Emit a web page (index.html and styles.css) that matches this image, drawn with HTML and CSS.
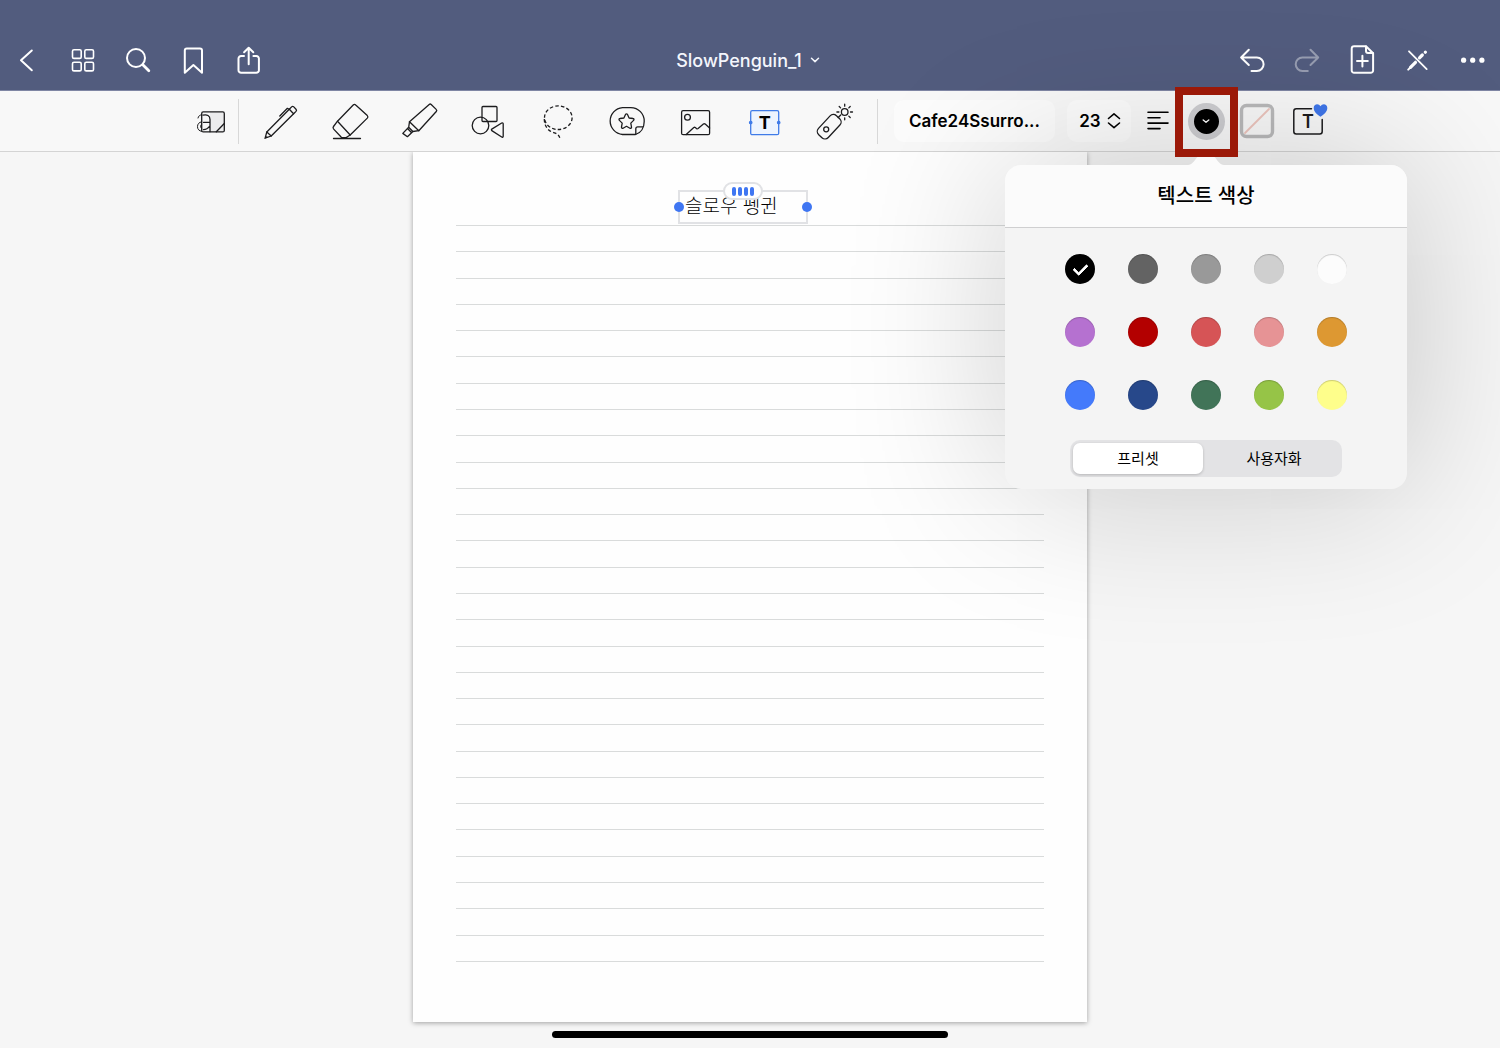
FILE: index.html
```html
<!DOCTYPE html>
<html lang="ko">
<head>
    <meta charset="UTF-8">
    <meta name="viewport" content="width=device-width, initial-scale=1">
    <title>SlowPenguin_1</title>
    <link rel="stylesheet" href="styles.css">
</head>
<body>
    <header class="navbar">
        <div class="nav-group">
            <button class="nav-btn" aria-label="뒤로">
                <svg class="nav-icon" viewBox="0 0 32 32"><path d="M19.8 6.5L9 16.300l10.800 10"/></svg>
            </button>
            <button class="nav-btn" aria-label="썸네일">
                <svg class="nav-icon thin" viewBox="0 0 32 32"><rect x="5.500" y="5.700" width="8.700" height="8.700" rx="1.500"/><rect x="17.800" y="5.700" width="8.700" height="8.700" rx="1.500"/><rect x="5.500" y="18.200" width="8.700" height="8.700" rx="1.500"/><rect x="17.800" y="18.200" width="8.700" height="8.700" rx="1.500"/></svg>
            </button>
            <button class="nav-btn" aria-label="검색">
                <svg class="nav-icon" viewBox="0 0 32 32"><circle cx="14" cy="14" r="9"/><path d="M20.800 20.800l6 6" stroke-width="2.800"/></svg>
            </button>
            <button class="nav-btn" aria-label="책갈피">
                <svg class="nav-icon" viewBox="0 0 32 32"><path d="M7.800 28.800V6.600a2 2 0 0 1 2-2h13.200a2 2 0 0 1 2 2v22.200L16.400 21z"/></svg>
            </button>
            <button class="nav-btn" aria-label="공유">
                <svg class="nav-icon" viewBox="0 0 32 32"><path d="M12 12H9.200A2.600 2.600 0 0 0 6.500 14.600v11.600a2.600 2.600 0 0 0 2.700 2.600h15a2.600 2.600 0 0 0 2.700-2.600V14.600a2.600 2.600 0 0 0-2.700-2.600h-2.800"/><path d="M16.700 20.300V4M12.100 8.200L16.700 3.700l4.600 4.500"/></svg>
            </button>
        </div>
        <button class="doc-title">
            SlowPenguin_1
            <svg width="10" height="10" viewBox="0 0 10 10"><path d="M1.500 3.200L5 6.600l3.500-3.400"/></svg>
        </button>
        <div class="nav-group nav-right">
            <button class="nav-btn" aria-label="실행 취소">
                <svg class="nav-icon" viewBox="0 0 32 32"><path d="M11.800 5.800L4.100 13.500l7.700 7.500M4.100 13.500h15.800a6.700 6.700 0 0 1 0 13.400H14.500"/></svg>
            </button>
            <button class="nav-btn" aria-label="다시 실행" disabled>
                <svg class="nav-icon" viewBox="0 0 32 32"><path d="M18.500 5.800l7.700 7.700L18.500 21M26.200 13.500H10.400a6.700 6.700 0 0 0 0 13.400h5.400"/></svg>
            </button>
            <button class="nav-btn" aria-label="페이지 추가">
                <svg class="nav-icon" viewBox="0 0 32 32"><path d="M19 2.200H7.100A2.400 2.400 0 0 0 4.700 4.600v21.800a2.400 2.400 0 0 0 2.400 2.400h16.600a2.400 2.400 0 0 0 2.400-2.400V9.300z"/><path d="M19 2.400v4.700a2 2 0 0 0 2 2h4.900M15.400 11.700v10.800M10 17.100h10.800"/></svg>
            </button>
            <button class="nav-btn" aria-label="읽기 모드">
                <svg class="nav-icon" viewBox="0 0 32 32"><path d="M7 7.300l17.700 17.800" stroke-width="1.800"/><path d="M8.500 23.300l5-5M17.500 13.800l2.800-2.800M23.300 8.200l.1-.1" stroke-width="3.200"/><path d="M6.200 25.600l3-3"/></svg>
            </button>
            <button class="nav-btn" aria-label="더 보기">
                <svg class="nav-icon dots" viewBox="0 0 32 32"><circle cx="6.600" cy="16.200" r="2.600"/><circle cx="15.700" cy="16.200" r="2.600"/><circle cx="24.900" cy="16.200" r="2.600"/></svg>
            </button>
        </div>
    </header>

    <div class="toolbar">
        <button class="zoom-btn" aria-label="확대 창">
            <svg class="tool-icon" viewBox="0 0 40 40"><path d="M19 11h14v19.500H19z" fill="#ececed" stroke="none"/><rect x="10.700" y="10.900" width="22.600" height="20" rx="1.500"/><path d="M12 14.200c4-.8 7 .2 7 4.300v12.200M12.500 21.400H19M25.300 30.700l8-8.200M12.500 28.700c3 0 4.500-1.200 6.500-3.800"/><path d="M7 17c.4-2 1.700-3 3.700-3.200M10.700 20.800c-2.800.5-4.200 2.200-4.200 4.900 0 2.500 1.600 4.400 4.200 4.600M10.700 23.200c-1.400.6-1.700 3.400 0 4.200" stroke-width="1"/></svg>
        </button>
        <span class="divider"></span>
        <div class="tools">
            <button class="tool-btn" aria-label="펜">
                <svg class="tool-icon" viewBox="0 0 40 40"><path d="M4.800 31L27.300 8.300l4.300 4.500L9.200 35z"/><path d="M27.300 8.300l2.300-2.400a1.600 1.600 0 0 1 2.200 0l2.200 2.300a1.600 1.600 0 0 1 0 2.200l-2.400 2.400M17.800 15l7.600-7.700 1.700.9M4.800 31l-1.700 6.200L9.200 35M3 37.300l1.800-1.400"/></svg>
            </button>
            <button class="tool-btn" aria-label="지우개">
                <svg class="tool-icon" viewBox="0 0 40 40"><path d="M6.500 20.200L22.200 4a1.800 1.800 0 0 1 2.500 0L36.300 14.600a1.800 1.800 0 0 1 0 2.500L19.200 34z"/><path d="M6.500 20.200l-4 5.300a2 2 0 0 0 .2 2.600l7.200 7.700c.5.600 1.100.9 1.800.9h2.500c.6 0 1-.2 1.400-.5l3.600-2.200M2.500 37.500h27"/></svg>
            </button>
            <button class="tool-btn" aria-label="형광펜">
                <svg class="tool-icon" viewBox="0 0 40 40"><path d="M9.500 20.700L29.200 3.500a1.500 1.500 0 0 1 2 0l5 4.900a1.500 1.500 0 0 1 .1 2.100L18.800 29.700z"/><path d="M9.500 20.700l-.8 5.600 4.200 4.200 5.900-.8M8.700 26.300l-5.900 6.100 4.600 3.300 5.500-5.200M8 28l3.400 3.500"/></svg>
            </button>
            <button class="tool-btn" aria-label="도형">
                <svg class="tool-icon" viewBox="0 0 40 40"><rect x="13" y="5.500" width="15" height="15" rx="1"/><circle cx="11.500" cy="24.500" r="8.300"/><path d="M22.800 28.100l9.900-6.100c.8-.5 1.500 0 1.500.9v12.300c0 .9-.7 1.300-1.500.8l-9.900-6.400a.9.9 0 0 1 0-1.500z"/></svg>
            </button>
            <button class="tool-btn" aria-label="올가미">
                <svg class="tool-icon dashed" viewBox="0 0 40 40"><ellipse cx="20.300" cy="16.700" rx="13.800" ry="11.800"/><path d="M6.300 18c0 6 2.700 10.800 7.700 13 3.300 1.200 6 1.200 7.800 5.700"/></svg>
            </button>
            <button class="tool-btn" aria-label="요소">
                <svg class="tool-icon" viewBox="0 0 40 40"><path d="M28.500 33.500H15.500a13.500 13.500 0 0 1 0-26.900h8.300a13.400 13.400 0 0 1 13.400 13.800c0 6-3.200 11.300-8.700 13.100z"/><path d="M28.800 33.300v-5.500a2 2 0 0 1 2-2h5"/><path d="M19.500 12.800c.5 0 .8.300 1 .7l1.600 3.500 3.900.5c1 .1 1.300 1.200.6 1.900l-2.800 2.700.7 3.900c.2 1-.8 1.600-1.600 1.200l-3.400-1.900-3.400 1.900c-.8.400-1.800-.2-1.600-1.200l.7-3.900-2.800-2.700c-.7-.7-.4-1.800.6-1.900l3.900-.5 1.600-3.500c.2-.4.500-.7 1-.7z"/></svg>
            </button>
            <button class="tool-btn" aria-label="이미지">
                <svg class="tool-icon" viewBox="0 0 40 40"><rect x="5.600" y="9.700" width="28" height="24" rx="1.500"/><circle cx="11.500" cy="16.300" r="2.900"/><path d="M10.200 33.500l7.600-6.900c.5-.5 1-.4 1.500 0l1.400 1.100c.5.400.9.300 1.400-.1l5.300-4.500c.6-.5 1.200-.5 1.800 0l4.400 3.900"/></svg>
            </button>
            <button class="tool-btn" aria-label="텍스트">
                <svg class="tool-icon active" viewBox="0 0 40 40"><rect x="5.700" y="9.700" width="28" height="24" rx="1.500"/><circle cx="5.700" cy="21.500" r="1.200"/><circle cx="33.700" cy="21.500" r="1.200"/><text x="19.700" y="28" text-anchor="middle">T</text></svg>
            </button>
            <button class="tool-btn" aria-label="레이저 포인터">
                <svg class="tool-icon" viewBox="0 0 40 40"><rect x="2.200" y="19" width="26" height="13.400" rx="4.500" transform="rotate(-47 15.200 25.700)"/><circle cx="12.200" cy="28.300" r="2.500"/><path d="M24.200 16.500l2.500-2.500"/><circle cx="30.700" cy="11" r="3.300"/><path d="M30.700 3.200v2M30.700 16.800v2M22.900 11h2M36.500 11h2M25.200 5.500l1.400 1.400M34.800 15.100l1.400 1.400M36.200 5.500l-1.400 1.400"/></svg>
            </button>
        </div>
        <span class="divider"></span>
        <button class="pill font-name">Cafe24Ssurro...</button>
        <button class="pill font-size">
            23
            <svg width="14" height="18" viewBox="0 0 14 18"><path d="M1.500 6.500L7 1.800l5.500 4.700M1.500 11L7 15.700l5.500-4.700"/></svg>
        </button>
        <button class="align-btn" aria-label="정렬">
            <svg width="22" height="20" viewBox="0 0 22 20"><path d="M1 1.200h20M1 6.700h12M1 12.100h20M1 17.600h12"/></svg>
        </button>
        <div class="color-tool">
            <button class="color-btn" aria-label="텍스트 색상">
                <span class="color-dot"><svg width="8" height="8" viewBox="0 0 8 8"><path d="M1.200 3L4 5.300 6.800 3"/></svg></span>
            </button>
            <div class="highlight"></div>
            <div class="popover">
                <svg class="popover-arrow" width="36" height="9" viewBox="0 0 36 9"><path d="M0 9c4 0 6-4 9-7.500C10 .3 11 0 12 0h12c1 0 2 .3 3 1.500C30 5 32 9 36 9z"/></svg>
                <h2 class="popover-title">텍스트 색상</h2>
                <div class="popover-body">
                    <div class="swatches">
                        <input class="swatch black" type="radio" name="color" aria-label="검정" checked>
                        <input class="swatch dark-gray" type="radio" name="color" aria-label="진한 회색">
                        <input class="swatch gray" type="radio" name="color" aria-label="회색">
                        <input class="swatch light-gray" type="radio" name="color" aria-label="연한 회색">
                        <input class="swatch white" type="radio" name="color" aria-label="흰색">
                        <input class="swatch purple" type="radio" name="color" aria-label="보라">
                        <input class="swatch red" type="radio" name="color" aria-label="빨강">
                        <input class="swatch coral" type="radio" name="color" aria-label="산호색">
                        <input class="swatch pink" type="radio" name="color" aria-label="분홍">
                        <input class="swatch orange" type="radio" name="color" aria-label="주황">
                        <input class="swatch blue" type="radio" name="color" aria-label="파랑">
                        <input class="swatch navy" type="radio" name="color" aria-label="남색">
                        <input class="swatch green" type="radio" name="color" aria-label="초록">
                        <input class="swatch lime" type="radio" name="color" aria-label="연두">
                        <input class="swatch yellow" type="radio" name="color" aria-label="노랑">
                    </div>
                    <div class="segmented">
                        <button class="segment selected">프리셋</button>
                        <button class="segment">사용자화</button>
                    </div>
                </div>
            </div>
        </div>
        <button class="fill-btn" aria-label="배경 색상">
            <svg width="36" height="36" viewBox="0 0 36 36"><rect x="2.500" y="2.500" width="31" height="31" rx="5"/><path d="M6 30L30 6"/></svg>
        </button>
        <button class="style-btn" aria-label="텍스트 스타일">
            <svg width="40" height="40" viewBox="0 0 40 40"><path class="frame" d="M23.500 7.700H8.300a2.500 2.500 0 0 0-2.500 2.500v20.300A2.500 2.500 0 0 0 8.300 33h23.400a2.500 2.500 0 0 0 2.500-2.500V18.500"/><text x="20" y="27" text-anchor="middle">T</text><path class="heart" d="M32.500 15.700C28.500 12.800 25.700 10.500 25.700 6.900c0-4.200 5-5 6.800-1.700 1.800-3.300 6.800-2.500 6.800 1.700 0 3.600-2.800 5.900-6.800 8.800z"/></svg>
        </button>
    </div>

    <main class="workspace">
        <div class="paper">
            <div class="text-box">
                <input class="text-input" type="text" value="슬로우 펭귄" aria-label="텍스트 상자">
                <span class="grip"><i></i><i></i><i></i><i></i></span>
                <span class="handle handle-left"></span>
                <span class="handle handle-right"></span>
            </div>
            <div class="lines">
                <hr><hr><hr><hr><hr><hr><hr><hr><hr><hr>
                <hr><hr><hr><hr><hr><hr><hr><hr><hr><hr>
                <hr><hr><hr><hr><hr><hr><hr><hr><hr>
            </div>
        </div>
        <div class="home-indicator"></div>
    </main>
</body>
</html>
```

FILE: styles.css
```css
* {
    box-sizing: border-box;
}
body {
    margin: 0;
    min-height: 100vh;
    display: flex;
    flex-direction: column;
    overflow: hidden;
    background-color: #f6f6f6;
    color: #000;
    font-family: Inter, "Noto Sans CJK KR", sans-serif;
}
button {
    display: flex;
    align-items: center;
    justify-content: center;
    padding: 0;
    border: none;
    background: none;
    color: inherit;
    font-family: inherit;
    cursor: pointer;
}
svg {
    flex: none;
    fill: none;
    stroke-linecap: round;
    stroke-linejoin: round;
}

/* navigation bar */
.navbar {
    display: grid;
    grid-template-columns: 1fr auto 1fr;
    align-items: center;
    height: 91px;
    padding-top: 30px;
    background-color: #525c7e;
    border-bottom: 1px solid #7f86a4;
    color: #f4f6fc;
}
.nav-group {
    display: flex;
}
.nav-right {
    justify-content: flex-end;
}
.nav-btn {
    width: 55px;
    height: 44px;
}
.nav-btn:disabled {
    opacity: 0.4;
}
.nav-icon {
    width: 32px;
    height: 32px;
    stroke: #fff;
    stroke-width: 2;
}
.nav-icon.thin {
    stroke-width: 1.6;
}
.nav-icon.dots {
    fill: #fff;
    stroke: none;
}
.doc-title {
    gap: 8px;
    padding-right: 4px;
    font-size: 18px;
    font-weight: 500;
}
.doc-title svg {
    stroke: #f4f6fc;
    stroke-width: 1.5;
}

/* toolbar */
.toolbar {
    position: relative;
    z-index: 2;
    display: flex;
    align-items: center;
    justify-content: center;
    height: 61px;
    padding-left: 12px;
    background-color: #f8f8f8;
    border-bottom: 1px solid #d4d4d4;
}
.tools {
    display: flex;
    margin: 0 9px 0 8px;
}
.zoom-btn {
    width: 55px;
    height: 44px;
}
.tool-btn {
    width: 69px;
    height: 44px;
}
.tool-icon {
    width: 40px;
    height: 40px;
    stroke: #1c1c1e;
    stroke-width: 1.3;
}
.tool-icon.dashed {
    stroke-dasharray: 3.5 2.2;
    stroke-linecap: butt;
}
.tool-icon.active {
    fill: #edf4fe;
    stroke: #3f7be8;
}
.tool-icon.active circle {
    fill: #3f7be8;
}
.tool-icon text {
    fill: #000;
    stroke: none;
    font-size: 18px;
    font-weight: 700;
}
.divider {
    width: 1px;
    height: 45px;
    background-color: #d8d8d8;
}
.pill {
    height: 42px;
    border-radius: 10px;
    background-color: #fcfcfc;
    font-size: 17px;
    font-weight: 600;
}
.font-name {
    width: 161px;
    margin: 0 12px 0 16px;
}
.font-size {
    width: 64px;
    padding-left: 2px;
    gap: 6px;
}
.font-size svg,
.align-btn svg {
    stroke: #000;
    stroke-width: 1.6;
}
.align-btn {
    width: 54px;
    height: 42px;
}
.color-tool {
    position: relative;
    width: 42px;
    height: 42px;
}
.color-btn {
    width: 42px;
    height: 42px;
}
.color-dot {
    display: flex;
    align-items: center;
    justify-content: center;
    width: 37px;
    height: 37px;
    border: 6px solid #cdcdd0;
    border-radius: 50%;
    background-color: #000;
}
.color-dot svg {
    stroke: #fff;
    stroke-width: 1.4;
}
.highlight {
    position: absolute;
    z-index: 2;
    top: -13px;
    left: -10px;
    width: 63px;
    height: 70px;
    border: 8px solid #9b1908;
    pointer-events: none;
}
.fill-btn {
    width: 60px;
    height: 42px;
}
.fill-btn rect {
    stroke: #b9b9ba;
    stroke-width: 3.4;
}
.fill-btn path {
    stroke: #ecc4bc;
    stroke-width: 1.8;
}
.style-btn {
    width: 42px;
    height: 42px;
}
.style-btn .frame {
    stroke: #1c1c1e;
    stroke-width: 1.5;
}
.style-btn .heart {
    fill: #3f76ea;
}
.style-btn text {
    fill: #1c1c1e;
    font-size: 18px;
    font-weight: 600;
}

/* text colour popover */
.popover {
    position: absolute;
    top: 65px;
    left: 50%;
    width: 402px;
    transform: translateX(-50%);
    border-radius: 16px;
    background-color: #f4f4f4;
    box-shadow: 0 0 160px rgba(0, 0, 0, 0.2);
}
.popover-arrow {
    position: absolute;
    top: -9px;
    left: 50%;
    transform: translateX(-50%);
    fill: #fbfbfb;
}
.popover-title {
    margin: 0;
    border-bottom: 1px solid #cfcfd0;
    border-radius: 16px 16px 0 0;
    background-color: #fbfbfb;
    font-size: 20px;
    font-weight: 500;
    line-height: 62px;
    text-align: center;
}
.popover-body {
    display: flex;
    flex-direction: column;
    align-items: center;
    gap: 30px;
    padding: 26px 0 12px;
}
.swatches {
    display: grid;
    grid-template-columns: repeat(5, 30px);
    gap: 33px;
}
.swatch {
    appearance: none;
    display: flex;
    align-items: center;
    justify-content: center;
    width: 30px;
    height: 30px;
    margin: 0;
    border-radius: 50%;
    box-shadow: inset 0 1px 1px rgba(0, 0, 0, 0.2);
    cursor: pointer;
}
.swatch:checked::after {
    content: "";
    width: 6px;
    height: 11px;
    margin-bottom: 2px;
    border: solid #fff;
    border-width: 0 3px 3px 0;
    border-radius: 1px;
    transform: rotate(45deg);
}
.black { background-color: #000; }
.dark-gray { background-color: #636363; }
.gray { background-color: #999; }
.light-gray { background-color: #cfcfcf; }
.white { background-color: #fcfcfc; }
.purple { background-color: #b571d0; }
.red { background-color: #b30000; }
.coral { background-color: #d65456; }
.pink { background-color: #e69395; }
.orange { background-color: #dd9832; }
.blue { background-color: #447afb; }
.navy { background-color: #27488a; }
.green { background-color: #417458; }
.lime { background-color: #96c447; }
.yellow { background-color: #fefe8b; }
.segmented {
    display: grid;
    grid-template-columns: 1fr 1fr;
    gap: 6px;
    width: 272px;
    height: 37px;
    padding: 3px;
    border-radius: 10px;
    background-color: #e3e3e5;
}
.segment {
    padding-bottom: 2px;
    border-radius: 7px;
    font-size: 15px;
    font-weight: 400;
}
.segment.selected {
    background-color: #fff;
    box-shadow: 0 1px 3px rgba(0, 0, 0, 0.2);
}

/* page */
.workspace {
    flex: 1;
    display: flex;
    flex-direction: column;
    align-items: center;
}
.paper {
    position: relative;
    flex: 1;
    display: flex;
    width: 100%;
    max-width: 674px;
    padding: 73px 43px 60px;
    background-color: #fefefe;
    box-shadow: 0 1px 5px rgba(0, 0, 0, 0.35);
}
.lines {
    flex: 1;
    display: flex;
    flex-direction: column;
    justify-content: space-between;
}
.lines hr {
    width: 100%;
    margin: 0;
    border: none;
    border-top: 1px solid #d9dbdb;
}
.text-box {
    position: absolute;
    top: 38px;
    left: 265px;
    width: 130px;
    height: 34px;
    border: 2px solid #e1e2e5;
}
.text-input {
    display: block;
    width: 100%;
    height: 100%;
    padding: 0 5px 6px;
    border: none;
    outline: none;
    background: none;
    color: #000;
    font-family: "Noto Sans CJK KR", sans-serif;
    font-size: 19px;
    font-weight: 300;
}
.grip {
    position: absolute;
    top: -10px;
    left: 43px;
    display: flex;
    align-items: center;
    justify-content: center;
    gap: 2px;
    width: 40px;
    height: 18px;
    border: 2px solid #e1e2e5;
    border-radius: 9px;
    background-color: #fff;
}
.grip i {
    width: 4px;
    height: 9px;
    border-radius: 2px;
    background-color: #3f76f2;
}
.handle {
    position: absolute;
    top: 10px;
    width: 10px;
    height: 10px;
    border-radius: 50%;
    background-color: #3f76f2;
}
.handle-left {
    left: -6px;
}
.handle-right {
    right: -6px;
}
.home-indicator {
    width: 396px;
    height: 7px;
    margin: 9px 0 10px;
    border-radius: 4px;
    background-color: #000;
}
```
